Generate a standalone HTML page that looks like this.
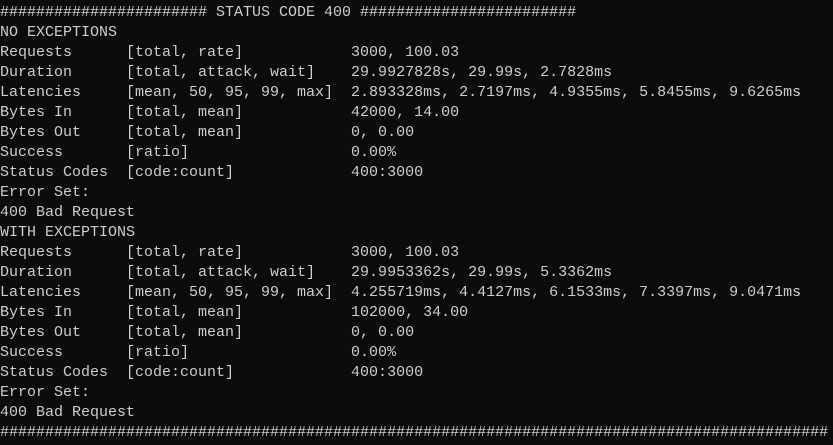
<!DOCTYPE html>
<html><head><style>
html,body{margin:0;padding:0;background:#0c0c0c;width:833px;height:445px;overflow:hidden}
pre{margin:0;padding:0;position:absolute;left:0;top:3px;font-family:"Liberation Mono",monospace;font-size:15px;line-height:20px;color:#cccccc;white-space:pre}
</style></head><body><pre>####################### STATUS CODE 400 ########################
NO EXCEPTIONS
Requests      [total, rate]            3000, 100.03
Duration      [total, attack, wait]    29.9927828s, 29.99s, 2.7828ms
Latencies     [mean, 50, 95, 99, max]  2.893328ms, 2.7197ms, 4.9355ms, 5.8455ms, 9.6265ms
Bytes In      [total, mean]            42000, 14.00
Bytes Out     [total, mean]            0, 0.00
Success       [ratio]                  0.00%
Status Codes  [code:count]             400:3000
Error Set:
400 Bad Request
WITH EXCEPTIONS
Requests      [total, rate]            3000, 100.03
Duration      [total, attack, wait]    29.9953362s, 29.99s, 5.3362ms
Latencies     [mean, 50, 95, 99, max]  4.255719ms, 4.4127ms, 6.1533ms, 7.3397ms, 9.0471ms
Bytes In      [total, mean]            102000, 34.00
Bytes Out     [total, mean]            0, 0.00
Success       [ratio]                  0.00%
Status Codes  [code:count]             400:3000
Error Set:
400 Bad Request
############################################################################################</pre></body></html>
